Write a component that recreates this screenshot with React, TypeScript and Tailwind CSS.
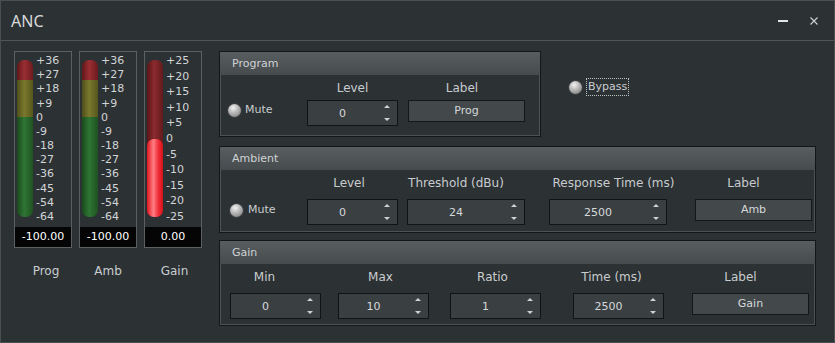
import { ReactNode } from 'react';

const PROG_SCALE = ['+36', '+27', '+18', '+9', '0', '-9', '-18', '-27', '-36', '-45', '-54', '-64'];
const GAIN_SCALE = ['+25', '+20', '+15', '+10', '+5', '0', '-5', '-10', '-15', '-20', '-25'];

function Radio() {
  return (
    <span className="block w-[13px] h-[13px] rounded-full shrink-0 bg-[radial-gradient(circle_at_40%_30%,#f2f2f2,#b4b4b4_45%,#727272)] shadow-[0_0_0_1px_#3c3f41]" />
  );
}

function LevelBar() {
  return (
    <div className="mt-[8px] w-[16px] h-[157px] rounded-[7px] overflow-hidden flex flex-col">
      <div className="h-[20px] bg-[linear-gradient(to_right,#5f1618,#9a2e33_45%,#6d1b1e)]" />
      <div className="h-[37px] bg-[linear-gradient(to_right,#4e4e1a,#7a792d_45%,#56561c)]" />
      <div className="flex-1 bg-[linear-gradient(to_right,#1a4a1d,#2f7534_45%,#1e5321)]" />
    </div>
  );
}

function GainBar() {
  return (
    <div className="mt-[8px] w-[16px] h-[157px] rounded-[7px] flex flex-col justify-end bg-[linear-gradient(to_right,#5a1517,#8c2a2e_45%,#621a1c)]">
      <div className="h-[78px] rounded-[7px] bg-[linear-gradient(to_right,#e0141c,#ff7e84_40%,#f0303a_70%,#d51018)]" />
    </div>
  );
}

function Meter({ bar, scale, value }: { bar: ReactNode; scale: string[]; value: string }) {
  return (
    <div className="w-[58px] h-[197px] border border-[#5b6063] flex flex-col">
      <div className="flex-1 flex pl-[2px]">
        {bar}
        <div className="ml-[3px] mt-[2px] h-[170px] flex flex-col justify-between text-[11px] leading-[14px] text-[#d2d5d7]">
          {scale.map((s) => (
            <span key={s}>{s}</span>
          ))}
        </div>
      </div>
      <div className="h-[20px] bg-[#050505] text-white text-center text-[11px] leading-[20px]">{value}</div>
    </div>
  );
}

function Group({ title, className, children }: { title: string; className: string; children: ReactNode }) {
  return (
    <div className={`shrink-0 border border-[#141618] shadow-[inset_0_0_0_1px_#4d5256] flex flex-col ${className}`}>
      <div className="h-[23px] shrink-0 bg-[linear-gradient(#585d60,#464b4e)] pl-[12px] text-[11px] leading-[23px] text-[#cfd2d4]">
        {title}
      </div>
      <div className="flex items-start pt-[6px]">{children}</div>
    </div>
  );
}

function Column({ label, shift, gap, children }: { label: string; shift: string; gap: string; children: ReactNode }) {
  return (
    <div className="flex flex-col shrink-0">
      <div className={`w-0 min-w-full h-[14px] flex justify-center whitespace-nowrap text-[12px] leading-[14px] text-[#c8ccce] ${shift} ${gap}`}>
        <span className="shrink-0">{label}</span>
      </div>
      {children}
    </div>
  );
}

function Spin({ value, wide }: { value: string; wide?: boolean }) {
  return (
    <div className={`h-[26px] border border-[#111315] bg-[#3a3f42] flex ${wide ? 'w-[118px]' : 'w-[91px]'}`}>
      <div className="flex-1 text-center text-[11px] leading-[26px] text-[#d5d8da]">{value}</div>
      <div className="w-[20px] flex flex-col items-center justify-between py-[4px]">
        <span className="w-0 h-0 border-x-[3px] border-x-transparent border-b-[3px] border-b-[#cfd1d3]" />
        <span className="w-0 h-0 border-x-[3px] border-x-transparent border-t-[3px] border-t-[#cfd1d3]" />
      </div>
    </div>
  );
}

function TextBox({ value }: { value: string }) {
  return (
    <div className="w-[117px] h-[22px] border border-[#141618] bg-[#43484b] text-center text-[11px] leading-[20px] text-[#d5d8da]">
      {value}
    </div>
  );
}

export default function App() {
  return (
    <div className="w-[835px] h-[343px] bg-[#2c3134] border border-[#4a4f52] overflow-hidden font-['DejaVu_Sans',sans-serif] text-[#c9cdd0]">
      <div className="h-[40px] border-b border-[#4e5457] flex items-center pl-[10px]">
        <span className="font-['Noto_Sans',sans-serif] text-[16px] text-[#d8dadc]">ANC</span>
        <div className="ml-auto flex items-center gap-[22px] pr-[16px]">
          <svg width="10" height="10" viewBox="0 0 10 10">
            <rect x="0" y="4" width="10" height="2" fill="#e2e4e5" />
          </svg>
          <svg width="8" height="8" viewBox="0 0 8 8">
            <path d="M0.5 0.5 L7.5 7.5 M7.5 0.5 L0.5 7.5" stroke="#d0d2d4" strokeWidth="1.1" />
          </svg>
        </div>
      </div>

      <div className="flex pt-[10px] pl-[13px]">
        <div className="flex flex-col shrink-0">
          <div className="flex gap-[7px]">
            <Meter bar={<LevelBar />} scale={PROG_SCALE} value="-100.00" />
            <Meter bar={<LevelBar />} scale={PROG_SCALE} value="-100.00" />
            <Meter bar={<GainBar />} scale={GAIN_SCALE} value="0.00" />
          </div>
          <div className="flex gap-[7px] mt-[16px] text-[12px] leading-[14px] text-[#c9cdd0]">
            <span className="w-[58px] text-center pl-[6px]">Prog</span>
            <span className="w-[58px] text-center">Amb</span>
            <span className="w-[58px] text-center pl-[3px]">Gain</span>
          </div>
        </div>

        <div className="ml-[17px] flex flex-col">
          <div className="flex items-start">
            <Group title="Program" className="w-[322px] h-[86px]">
              <div className="shrink-0 pl-[8px] w-[87px] mt-[22px] h-[14px] flex items-center gap-[4px] text-[11px]">
                <Radio />
                <span>Mute</span>
              </div>
              <Column label="Level" shift="" gap="mb-[5px]">
                <Spin value="0" />
              </Column>
              <div className="ml-[10px] shrink-0">
                <Column label="Label" shift="pr-[9px]" gap="mb-[5px]">
                  <TextBox value="Prog" />
                </Column>
              </div>
            </Group>
            <div className="ml-[28px] mt-[27px] flex items-center gap-[4px] text-[11px]">
              <Radio />
              <span className="border border-dotted border-[#bfc2c4] px-[1px] leading-[16px]">Bypass</span>
            </div>
          </div>

          <Group title="Ambient" className="w-[597px] h-[87px] mt-[9px]">
            <div className="shrink-0 pl-[10px] w-[87px] mt-[27px] h-[14px] flex items-center gap-[5px] text-[11px]">
              <Radio />
              <span>Mute</span>
            </div>
            <Column label="Level" shift="pr-[7px]" gap="mb-[9px]">
              <Spin value="0" />
            </Column>
            <div className="ml-[9px] shrink-0">
              <Column label="Threshold (dBu)" shift="pr-[20px]" gap="mb-[9px]">
                <Spin value="24" wide />
              </Column>
            </div>
            <div className="ml-[24px] shrink-0">
              <Column label="Response Time (ms)" shift="pl-[11px]" gap="mb-[9px]">
                <Spin value="2500" wide />
              </Column>
            </div>
            <div className="ml-[28px] shrink-0">
              <Column label="Label" shift="pr-[20px]" gap="mb-[9px]">
                <TextBox value="Amb" />
              </Column>
            </div>
          </Group>

          <Group title="Gain" className="w-[597px] h-[86px] mt-[7px]">
            <div className="pl-[10px] shrink-0">
              <Column label="Min" shift="pr-[22px]" gap="mb-[9px]">
                <Spin value="0" />
              </Column>
            </div>
            <div className="ml-[17px] shrink-0">
              <Column label="Max" shift="pr-[6px]" gap="mb-[9px]">
                <Spin value="10" />
              </Column>
            </div>
            <div className="ml-[21px] shrink-0">
              <Column label="Ratio" shift="pr-[6px]" gap="mb-[9px]">
                <Spin value="1" />
              </Column>
            </div>
            <div className="ml-[32px] shrink-0">
              <Column label="Time (ms)" shift="pr-[14px]" gap="mb-[9px]">
                <Spin value="2500" />
              </Column>
            </div>
            <div className="ml-[28px] shrink-0">
              <Column label="Label" shift="pr-[20px]" gap="mb-[9px]">
                <TextBox value="Gain" />
              </Column>
            </div>
          </Group>
        </div>
      </div>
    </div>
  );
}
